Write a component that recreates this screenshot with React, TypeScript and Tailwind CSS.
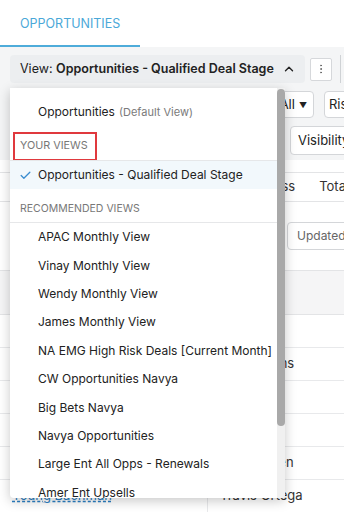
import { Check, ChevronUp, EllipsisVertical } from "lucide-react";

const recommended = [
  "APAC Monthly View",
  "Vinay Monthly View",
  "Wendy Monthly View",
  "James Monthly View",
  "NA EMG High Risk Deals [Current Month]",
  "CW Opportunities Navya",
  "Big Bets Navya",
  "Navya Opportunities",
  "Large Ent All Opps - Renewals",
  "Amer Ent Upsells",
  "Amer Ent New Logos",
];

const rows = [
  ["", ""],
  ["", "Cole Adams"],
  ["", ""],
  ["", ""],
  ["", "Erik Hansen"],
  ["Young Bachman", "Travis Ortega"],
];

function ViewsDropdown() {
  return (
    <div className="absolute left-[10px] top-[88px] w-[275px] h-[410px] bg-white rounded-b-[4px] shadow-[0_3px_12px_rgba(0,0,0,0.22)] overflow-hidden">
      <div className="pt-[10px] pr-[8px] text-[12px] text-[#222]">
        <div className="h-[28px] flex items-center pl-[28px]">
          Opportunities
          <span className="ml-[4px] text-[11px] text-[#7a7a7a]">(Default View)</span>
        </div>

        <div className="mt-[6px] ml-[3px] w-[84px] h-[29px] border-2 border-[#e0393e] flex items-center pl-[5px] text-[10.8px] text-[#777]">
          YOUR VIEWS
        </div>
        <div className="-mt-[1px] h-px bg-[#e6e7e9]" />
        <div className="h-[28px] flex items-center bg-[#f2f8fc]">
          <Check className="ml-[9px] mr-[6px] text-[#3b8dd0]" size={13} strokeWidth={2.4} />
          Opportunities - Qualified Deal Stage
        </div>

        <div className="h-[34px] pt-[6px] flex items-center pl-[10px] text-[10.5px] text-[#777] border-b border-[#e6e7e9]">
          RECOMMENDED VIEWS
        </div>
        {recommended.map((name) => (
          <div key={name} className="h-[28.4px] flex items-center pl-[28px] whitespace-nowrap">
            {name}
          </div>
        ))}
      </div>

      {/* scrollbar */}
      <div className="absolute right-0 top-0 w-[8px] h-full bg-[#f0f0f0]">
        <div className="w-[8px] h-[337px] mt-[1px] rounded-full bg-[#a9a9a9]" />
      </div>
    </div>
  );
}

export default function App() {
  return (
    <div className="relative w-[344px] h-[512px] overflow-hidden bg-white font-['Inter',sans-serif]">
      {/* tab header */}
      <div className="h-[47px] bg-white">
        <div className="w-[140px] h-[47px] border-b-2 border-[#4eacda] flex items-center pl-[20px] pt-[3px] text-[12.5px] text-[#4aa8d8]">
          OPPORTUNITIES
        </div>
      </div>

      <div className="bg-[#f4f5f6] pt-[8px] pb-[5px]">
        {/* toolbar */}
        <div className="flex items-center pl-[10px]">
          <div className="w-[295px] h-[28px] shrink-0 rounded-[4px] bg-[#eceef0] flex items-center pl-[10px] text-[12.5px] text-[#222] whitespace-nowrap">
            View:&nbsp;<span className="font-semibold">Opportunities - Qualified Deal Stage</span>
            <ChevronUp className="ml-[8px]" size={14} strokeWidth={2.4} />
          </div>
          <div className="ml-[5px] w-[22px] h-[23px] shrink-0 bg-white border border-[#d6d8db] rounded-[2px] flex items-center justify-center">
            <EllipsisVertical size={12} className="text-[#666]" />
          </div>
          <div className="ml-[8px] w-px h-[28px] shrink-0 bg-[#cfd2d5]" />
        </div>

        {/* filters */}
        <div className="mt-[8px] flex pl-[236px] gap-[10px] whitespace-nowrap text-[13px] text-[#222]">
          <div className="w-[78px] h-[27px] shrink-0 bg-white border border-[#d4d6d9] rounded-[4px] flex items-center justify-end pr-[6px]">
            Stage: All<span className="ml-[4px] text-[8px]">▼</span>
          </div>
          <div className="h-[27px] shrink-0 bg-white border border-[#d4d6d9] rounded-[4px] flex items-center pl-[4px] pr-[10px]">
            Risk
          </div>
        </div>
        <div className="mt-[8px] flex pl-[290px] whitespace-nowrap text-[13px] text-[#222]">
          <div className="h-[29px] shrink-0 bg-white border border-[#d4d6d9] rounded-[4px] flex items-center pl-[7px] pr-[4px]">
            Visibility
          </div>
        </div>
      </div>

      {/* sub tabs */}
      <div className="bg-white pt-[12px]">
        <div className="h-[30px] border-y border-[#e3e4e6] flex items-center whitespace-nowrap text-[13px] text-[#333] pl-[240px] gap-[24px]">
          <span>Business</span>
          <span>Total</span>
        </div>
        <div className="h-[68px] flex items-center pl-[287px]">
          <div className="h-[28px] border border-[#d4d6d9] rounded-[4px] flex items-center pl-[9px] pr-[4px] text-[12px] text-[#666] whitespace-nowrap">
            Updated
          </div>
        </div>
      </div>

      {/* table */}
      <div className="bg-white border-t border-[#e3e4e6]">
        <div className="h-[44px] bg-[#f5f5f6] border-b border-[#e3e4e6]" />
        {rows.map(([name, owner], i) => (
          <div key={i} className="h-[33px] flex border-b border-[#e8e9eb] text-[13px] whitespace-nowrap">
            <div className="w-[208px] shrink-0 border-r border-[#e8e9eb] flex items-center pl-[12px] text-[#2a7fc4] underline decoration-dashed">
              {name}
            </div>
            <div className="flex items-center pl-[12px] text-[#333]">{owner}</div>
          </div>
        ))}
      </div>

      <ViewsDropdown />
    </div>
  );
}
